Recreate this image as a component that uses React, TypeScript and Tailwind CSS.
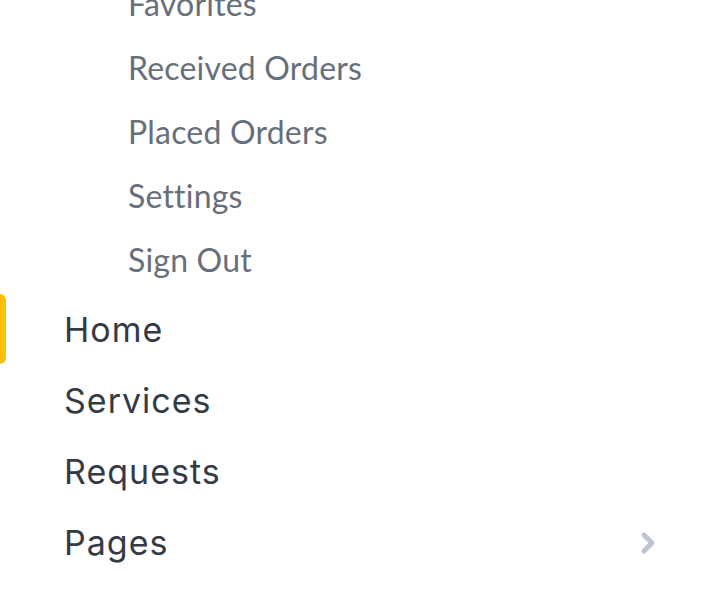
import React from "react";

const subItems = ["Favorites", "Received Orders", "Placed Orders", "Settings", "Sign Out"];

const mainItems = [
  { name: "Home", active: true },
  { name: "Services" },
  { name: "Requests" },
  { name: "Pages", hasChildren: true },
  { name: "Blog" },
];

const ChevronRight = () => (
  <svg width="20" height="26" viewBox="0 0 20 26" fill="none">
    <path d="M6 5l8 8-8 8" stroke="#bcc5d1" strokeWidth="5" strokeLinecap="round" strokeLinejoin="round" />
  </svg>
);

export default function App() {
  return (
    <div className="w-[720px] h-[600px] overflow-hidden bg-white">
      <div className="-mt-[28px] flex flex-col">
        <ul className="flex flex-col">
          {subItems.map((item) => (
            <li
              key={item}
              className="h-16 flex items-center pl-[128px] text-[32px] tracking-[0.2px] text-[#676f7b] font-['Lato',sans-serif]"
            >
              {item}
            </li>
          ))}
        </ul>
        <ul className="mt-[2px] flex flex-col">
          {mainItems.map((item) => (
            <li key={item.name} className="relative h-[71px] flex items-center justify-between pl-16 pr-[62px]">
              {item.active && (
                <span className="absolute left-0 top-0 h-[70px] w-[6px] rounded-r-md bg-[#ffc107]" />
              )}
              <span className="text-[34px] text-[#343a46] tracking-[1px] font-['Inter',sans-serif]">
                {item.name}
              </span>
              {item.hasChildren && <ChevronRight />}
            </li>
          ))}
        </ul>
      </div>
    </div>
  );
}
